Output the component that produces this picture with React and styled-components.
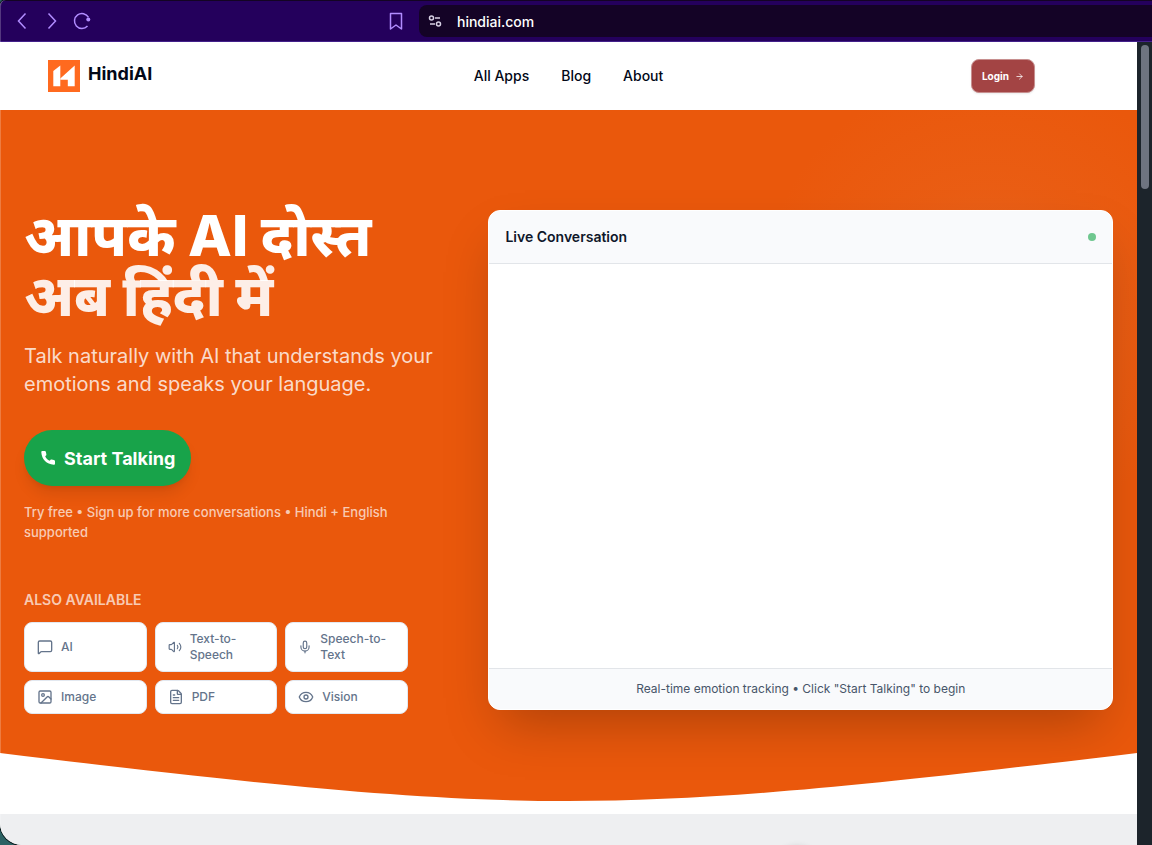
import React from "react";
import styled, { createGlobalStyle } from "styled-components";
import { MessageSquare, Volume2, Mic, Image, FileText, Eye, ArrowRight } from "lucide-react";

const GlobalStyle = createGlobalStyle`
  *, *::before, *::after { box-sizing: border-box; }
  body {
    margin: 0;
    background: #2c6264;
    font-family: Inter, "Noto Sans Devanagari", "Noto Sans", sans-serif;
    -webkit-font-smoothing: antialiased;
  }
  h1, h2, p { margin: 0; padding: 0; }
  button, input { font: inherit; }
`;

const Window = styled.div`
  position: relative;
  display: flex;
  flex-direction: column;
  height: 100vh;
  overflow: hidden;
  background: #ffffff;
  border-radius: 6px 0 0 22px;
  box-shadow: 0 0 0 1px #0a1a1c;

  &::after {
    content: "";
    position: absolute;
    inset: 0;
    border-left: 1px solid rgba(255, 255, 255, 0.22);
    border-radius: inherit;
    pointer-events: none;
  }
`;

const BrowserBar = styled.div`
  display: flex;
  align-items: center;
  flex: none;
  height: 42px;
  padding-left: 12px;
  background: #24005c;
  border-top: 1px solid #130423;
  border-bottom: 1px solid #43208a;
`;

const BarButtons = styled.div`
  display: flex;
  gap: 10px;
  flex: 0 0 374px;
`;

const BarButton = styled.button`
  display: grid;
  place-items: center;
  width: 20px;
  height: 20px;
  padding: 0;
  border: 0;
  background: none;
  color: #b18cff;
`;

const Address = styled.label`
  display: flex;
  align-items: center;
  flex: 1;
  gap: 14px;
  height: 32px;
  margin-left: 13px;
  padding-left: 8px;
  border-radius: 8px 0 0 8px;
  background: #140326;
  color: #d8d0e4;
`;

const AddressInput = styled.input`
  flex: 1;
  padding: 0;
  border: 0;
  outline: 0;
  background: none;
  color: #ffffff;
  font-size: 14px;
  font-weight: 500;
`;

const Viewport = styled.div`
  display: flex;
  flex: 1;
  min-height: 0;
`;

const Page = styled.div`
  flex: 1;
  min-width: 0;
  overflow: hidden;
`;

const Scrollbar = styled.div`
  flex: 0 0 15px;
  padding: 3px 3px 0 4px;
  background: #1c242b;
`;

const Thumb = styled.div`
  height: 144px;
  border-radius: 4px;
  background: #6e7480;
`;

const Header = styled.header`
  display: grid;
  grid-template-columns: 1fr auto 1fr;
  align-items: center;
  height: 68px;
  padding: 0 48px;
`;

const Brand = styled.a`
  display: flex;
  align-items: center;
  gap: 8px;
  color: #020817;
  font-size: 18px;
  line-height: 28px;
  font-weight: 700;
  text-decoration: none;
`;

const BrandName = styled.span`
  padding-bottom: 4px;
`;

const Nav = styled.nav`
  display: flex;
  gap: 32px;
`;

const NavLink = styled.a`
  color: #020817;
  font-size: 14px;
  line-height: 20px;
  font-weight: 500;
  text-decoration: none;
`;

const Login = styled.button`
  display: flex;
  align-items: center;
  justify-self: end;
  gap: 6px;
  height: 34px;
  margin-right: 54px;
  padding: 0 10px;
  border: 1px solid #c78f8f;
  border-radius: 8px;
  background: #a34444;
  color: #ffffff;
  font-size: 10px;
  font-weight: 700;
  box-shadow: 0 1px 2px rgba(0, 0, 0, 0.08);
`;

const Hero = styled.section`
  position: relative;
  display: grid;
  grid-template-columns: 2fr 3fr;
  align-items: center;
  gap: 48px;
  padding: 96px 24px 100px;
  overflow: hidden;
  background:
    radial-gradient(circle 230px at 87% 27%, rgba(232, 122, 62, 0.4), rgba(232, 122, 62, 0.14) 50%, rgba(234, 88, 12, 0)),
    #ea580c;
`;

const Curve = styled.svg`
  position: absolute;
  left: 0;
  bottom: 0;
  width: 100%;
  height: 61px;
`;

const Intro = styled.div`
  min-width: 0;
`;

const Title = styled.h1`
  color: #ffffff;
  font-size: 57px;
  line-height: 60px;
  font-weight: 800;
`;

const TitleSoft = styled.span`
  display: block;
  color: rgba(255, 255, 255, 0.9);
`;

const Lead = styled.p`
  margin-top: 16px;
  color: rgba(255, 255, 255, 0.8);
  font-size: 20px;
  line-height: 28px;
`;

const Start = styled.button`
  display: flex;
  align-items: center;
  gap: 8px;
  height: 56px;
  margin-top: 32px;
  padding: 0 16px;
  border: 0;
  border-radius: 28px;
  background: #18a34a;
  color: #ffffff;
  font-size: 18px;
  font-weight: 700;
  white-space: nowrap;
  box-shadow: 0 10px 15px -3px rgba(0, 0, 0, 0.1), 0 4px 6px -4px rgba(0, 0, 0, 0.1);
`;

const Note = styled.p`
  margin-top: 16px;
  color: rgba(255, 255, 255, 0.7);
  font-size: 13px;
  line-height: 20px;
  font-weight: 500;
`;

const AlsoTitle = styled.h2`
  margin-top: 48px;
  color: rgba(255, 255, 255, 0.7);
  font-size: 14px;
  line-height: 20px;
  font-weight: 600;
`;

const Apps = styled.div`
  display: grid;
  grid-template-columns: repeat(3, 1fr);
  gap: 8px;
  max-width: 384px;
  margin-top: 12px;
`;

const AppLink = styled.a`
  display: flex;
  align-items: center;
  gap: 8px;
  padding: 8px 12px;
  border: 1px solid #e2e8f0;
  border-radius: 8px;
  background: #ffffff;
  color: #64748b;
  font-size: 12px;
  line-height: 16px;
  font-weight: 500;
  text-decoration: none;

  svg { flex: none; }
`;

const Card = styled.div`
  display: flex;
  flex-direction: column;
  height: 500px;
  overflow: hidden;
  border: 1px solid #ffffff;
  border-radius: 12px;
  background: #ffffff;
  box-shadow: 0 25px 50px -12px rgba(0, 0, 0, 0.25);
`;

const CardHeader = styled.div`
  display: flex;
  align-items: center;
  justify-content: space-between;
  height: 53px;
  padding: 0 16px;
  border-bottom: 1px solid #e2e5e9;
  background: #f9fafc;
`;

const CardTitle = styled.h2`
  color: #0f172a;
  font-size: 14px;
  line-height: 20px;
  font-weight: 600;
`;

const Status = styled.span`
  width: 8px;
  height: 8px;
  border-radius: 50%;
  background: #6fc78f;
`;

const Messages = styled.div`
  flex: 1;
`;

const CardFooter = styled.p`
  padding: 12px;
  border-top: 1px solid #e2e5e9;
  background: #f9fafc;
  color: #475569;
  font-size: 12px;
  line-height: 16px;
  text-align: center;
`;

const NextSection = styled.section`
  height: 120px;
  padding: 32px 0 0 68%;
  background: #eeeff1;
`;

const Badge = styled.div`
  width: 48px;
  height: 48px;
  border-radius: 24px;
  background: #ffffff;
  box-shadow: 0 0 6px rgba(0, 0, 0, 0.12);
`;

const APPS = [
  { label: "AI", Icon: MessageSquare, size: 16 },
  { label: "Text-to-Speech", Icon: Volume2, size: 14 },
  { label: "Speech-to-Text", Icon: Mic, size: 14 },
  { label: "Image", Icon: Image, size: 16 },
  { label: "PDF", Icon: FileText, size: 16 },
  { label: "Vision", Icon: Eye, size: 16 },
];

export default function App() {
  return (
    <>
      <GlobalStyle />
      <Window>
        <BrowserBar>
          <BarButtons>
            <BarButton aria-label="Back">
              <svg width="20" height="20" fill="none" stroke="currentColor" strokeWidth="1.5"><path d="M13.500 2.500 6.500 10l7 7.500" /></svg>
            </BarButton>
            <BarButton aria-label="Forward">
              <svg width="20" height="20" fill="none" stroke="currentColor" strokeWidth="1.5"><path d="M6.500 2.500 13.500 10l-7 7.500" /></svg>
            </BarButton>
            <BarButton aria-label="Reload">
              <svg width="20" height="20" fill="none" stroke="currentColor" strokeWidth="1.5">
                <path d="M15.500 15.100A7.500 7.500 0 1 1 16.500 6.300" />
                <circle cx="16.300" cy="8.500" r="2" fill="currentColor" stroke="none" />
              </svg>
            </BarButton>
          </BarButtons>
          <BarButton aria-label="Bookmark">
            <svg width="20" height="20" fill="none" stroke="currentColor" strokeWidth="1.5"><path d="M4.500 2.500h11v15.500L10 14l-5.500 4z" strokeLinejoin="round" /></svg>
          </BarButton>
          <Address>
            <svg width="16" height="16" fill="none" stroke="currentColor" strokeWidth="1.5">
              <circle cx="4.500" cy="5" r="2" /><path d="M8 5h5" />
              <circle cx="11.500" cy="11" r="2" /><path d="M3 11h5" />
            </svg>
            <AddressInput aria-label="Address" defaultValue="hindiai.com" />
          </Address>
        </BrowserBar>
        <Viewport>
          <Page>
            <Header>
              <Brand href="#">
                <svg width="32" height="32" viewBox="0 0 32 32" aria-hidden="true">
                  <path fill="#ff6a1f" d="M0 0h32v32H0z" />
                  <path fill="#fff" d="M5.300 11 12.300 5.500V26.300H5.300z" />
                  <path fill="#fff" d="M26.700 5.500 12.300 18.500V19.700H19.800V26.300H26.700z" />
                </svg>
                <BrandName>HindiAI</BrandName>
              </Brand>
              <Nav>
                <NavLink href="#">All Apps</NavLink>
                <NavLink href="#">Blog</NavLink>
                <NavLink href="#">About</NavLink>
              </Nav>
              <Login>Login <ArrowRight size={9} /></Login>
            </Header>
            <Hero>
              <Intro>
                <Title>
                  आपके AI दोस्त
                  <TitleSoft>अब हिंदी में</TitleSoft>
                </Title>
                <Lead>Talk naturally with AI that understands your emotions and speaks your language.</Lead>
                <Start>
                  <svg width="16" height="16" fill="currentColor" aria-hidden="true">
                    <path d="M1.300 2.200C1.200 1.400 1.800 1 2.600 1H4.700C5.400 1 5.800 1.400 5.900 2L6.400 4.400C6.500 5.200 5.900 5.500 5.200 6.200 6.100 8.300 7.600 9.800 9.700 10.800 10.400 10.100 10.800 9.500 11.600 9.600L14 10.100C14.600 10.200 15 10.600 15 11.300V13.400C15 14.300 14.500 14.800 13.700 14.700 6.600 14.200 1.800 9.300 1.300 2.200Z" />
                  </svg>
                  Start Talking
                </Start>
                <Note>Try free • Sign up for more conversations • Hindi + English supported</Note>
                <AlsoTitle>ALSO AVAILABLE</AlsoTitle>
                <Apps>
                  {APPS.map(({ label, Icon, size }) => (
                    <AppLink href="#" key={label}><Icon size={size} />{label}</AppLink>
                  ))}
                </Apps>
              </Intro>
              <Card>
                <CardHeader>
                  <CardTitle>Live Conversation</CardTitle>
                  <Status />
                </CardHeader>
                <Messages />
                <CardFooter>Real-time emotion tracking • Click "Start Talking" to begin</CardFooter>
              </Card>
              <Curve viewBox="0 0 1200 61" preserveAspectRatio="none" aria-hidden="true">
                <path fill="#fff" d="M0 0C560 64 640 64 1200 0V61H0z" />
              </Curve>
            </Hero>
            <NextSection><Badge /></NextSection>
          </Page>
          <Scrollbar><Thumb /></Scrollbar>
        </Viewport>
      </Window>
    </>
  );
}
